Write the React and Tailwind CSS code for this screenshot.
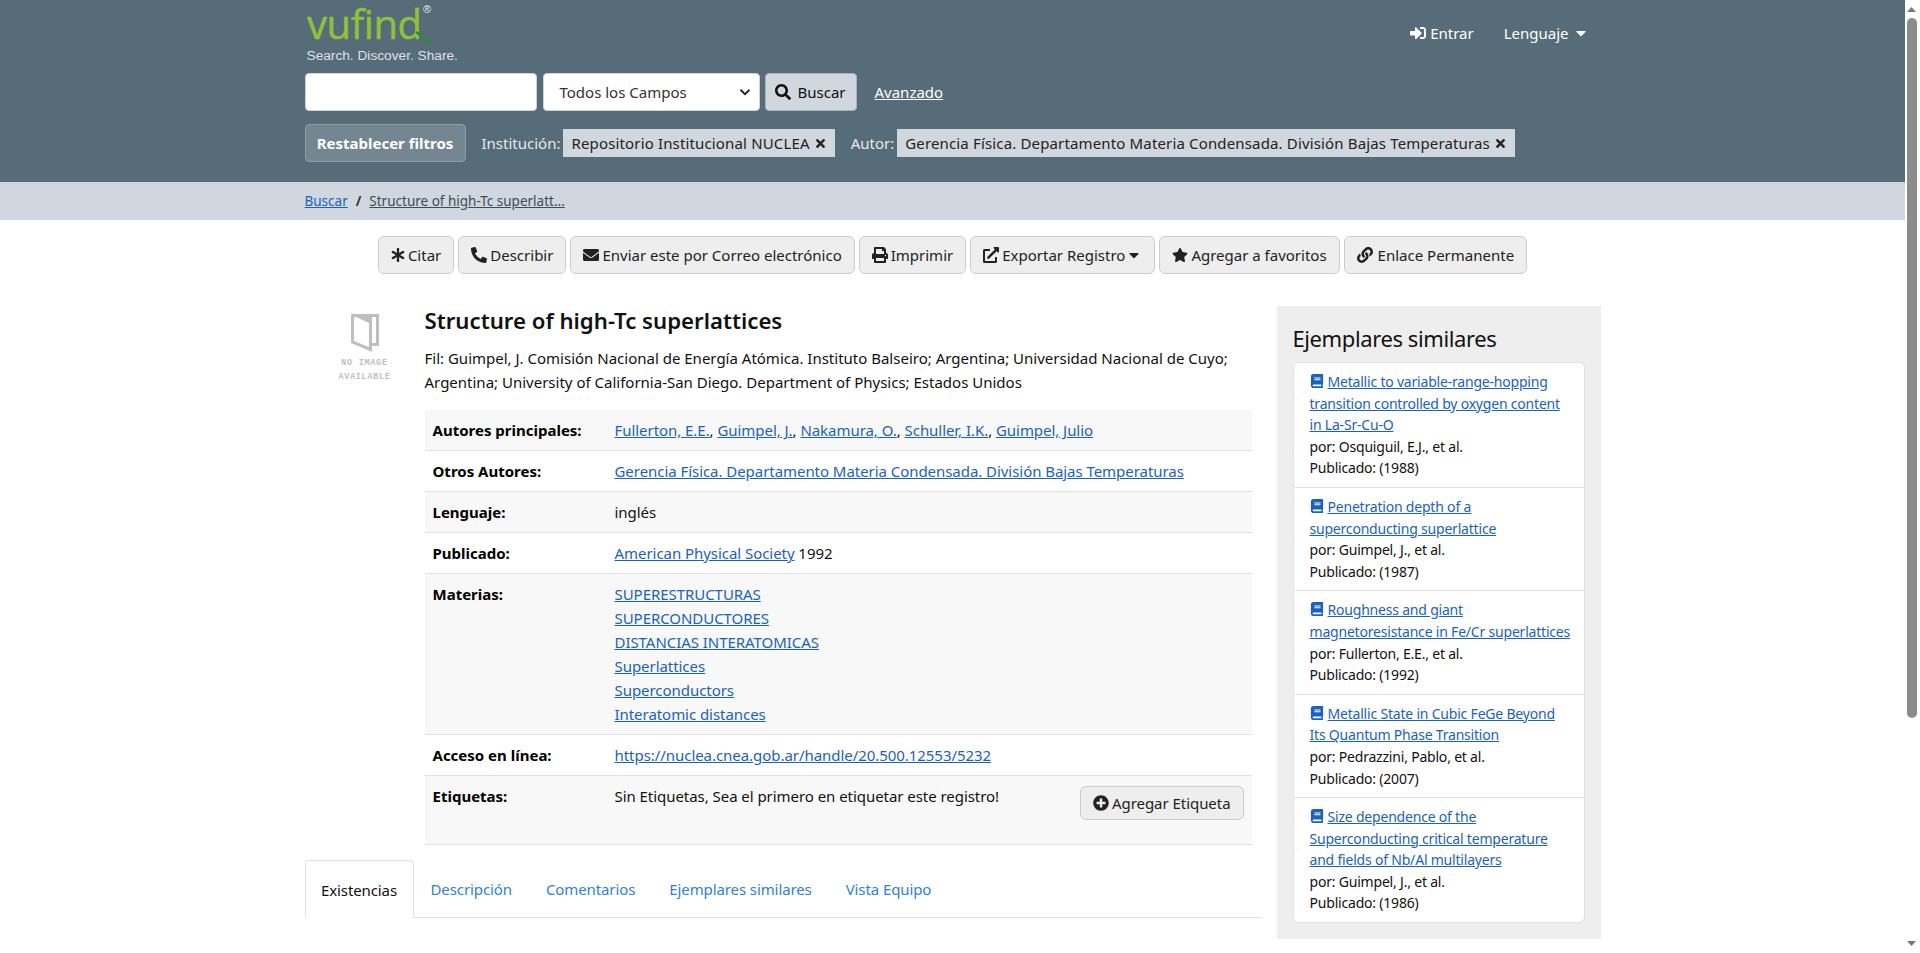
import { FaSignInAlt, FaCaretDown, FaSearch, FaAsterisk, FaPhoneAlt, FaEnvelope, FaPrint, FaExternalLinkAlt, FaStar, FaLink, FaPlusCircle, FaBook, FaTimes } from "react-icons/fa";

const actions = [
  { icon: <FaAsterisk size={14} />, label: "Citar" },
  { icon: <FaPhoneAlt size={16} />, label: "Describir" },
  { icon: <FaEnvelope size={16} />, label: "Enviar este por Correo electrónico" },
  { icon: <FaPrint size={16} />, label: "Imprimir" },
  { icon: <FaExternalLinkAlt size={16} />, label: "Exportar Registro", caret: true },
  { icon: <FaStar size={16} />, label: "Agregar a favoritos" },
  { icon: <FaLink size={16} className="mr-[2px]" />, label: "Enlace Permanente" },
];

const similar = [
  { title: "Metallic to variable-range-hopping transition controlled by oxygen content in La-Sr-Cu-O", by: "Osquiguil, E.J., et al.", year: "1988" },
  { title: "Penetration depth of a superconducting superlattice", by: "Guimpel, J., et al.", year: "1987" },
  { title: "Roughness and giant magnetoresistance in Fe/Cr superlattices", by: "Fullerton, E.E., et al.", year: "1992" },
  { title: "Metallic State in Cubic FeGe Beyond Its Quantum Phase Transition", by: "Pedrazzini, Pablo, et al.", year: "2007" },
  { title: "Size dependence of the Superconducting critical temperature and fields of Nb/Al multilayers", by: "Guimpel, J., et al.", year: "1986" },
];

const subjects = ["SUPERESTRUCTURAS", "SUPERCONDUCTORES", "DISTANCIAS INTERATOMICAS", "Superlattices", "Superconductors", "Interatomic distances"];
const authors = ["Fullerton, E.E.", "Guimpel, J.", "Nakamura, O.", "Schuller, I.K.", "Guimpel, Julio"];
const tabs = ["Descripción", "Comentarios", "Ejemplares similares", "Vista Equipo"];

const Lnk = ({ children }) => <a href="#" className="text-[#1a62bd] underline">{children}</a>;

const Row = ({ label, striped, children }) => (
  <div className={`flex border-b border-[#dee2e6] ${striped ? "bg-[#f8f8f8]" : "bg-white"}`}>
    <div className="w-[182px] shrink-0 px-2 py-2 font-bold text-black">{label}</div>
    <div className="flex-1 px-2 py-2 tracking-[-0.05px] text-[#111]">{children}</div>
  </div>
);

const Logo = () => (
  <svg width="140" height="48" viewBox="0 0 140 48" className="block">
    <text x="0" y="35" fontFamily="Open Sans, sans-serif" fontWeight="400" fontSize="40" letterSpacing="-0.4" stroke="#8fc13a" strokeWidth="0.5" fill="#8fc13a">vufind</text>
    <line x1="109" y1="28" x2="124" y2="39" stroke="#2f8a3a" strokeWidth="2.5" />
    <text x="116" y="9" fontFamily="Liberation Sans, sans-serif" fontSize="11" fill="#e6eaec">®</text>
  </svg>
);

const NoImage = () => (
  <div className="flex w-[120px] shrink-0 flex-col items-center pt-[7px]">
    <svg width="28" height="38" viewBox="0 0 28 38">
      <path d="M0 0H28V32H21V38L0 29Z M3 3V27L18 33V9L5 3Z M21 3V29H25V3Z" fill="#bfbfbf" fillRule="evenodd" />
    </svg>
    <div className="mt-[4px] text-center font-['Liberation_Mono',monospace] text-[8.5px] font-bold leading-[14px] tracking-[0.7px] text-[#c0c0c0]">
      NO IMAGE<br />AVAILABLE
    </div>
  </div>
);

export default function App() {
  return (
    <div className="flex h-screen overflow-hidden bg-white font-['Noto_Sans',sans-serif] text-[15px] leading-6 text-[#111]">
      <div className="w-[1905px] shrink-0">
        {/* Header */}
        <header className="h-[182px] bg-[#566c79]">
          <div className="mx-auto w-[1296px] pt-[4px]">
            <div className="flex justify-between">
              <div className="h-[69px] pl-[2px]">
                <div className="h-[44px]"><Logo /></div>
                <div className="font-['Liberation_Sans',sans-serif] text-[13.7px] leading-[16px] text-[#dde2e5]">Search. Discover. Share.</div>
              </div>
              <div className="flex items-center gap-[30px] self-start pr-[12px] pt-[17px] text-white">
                <span className="flex items-center gap-1"><FaSignInAlt size={16} /> Entrar</span>
                <span className="flex items-center gap-1">Lenguaje <FaCaretDown size={16} /></span>
              </div>
            </div>
            <div className="flex items-center">
              <input className="h-[38px] w-[232px] rounded border border-[#ced4da] bg-white" />
              <div className="ml-[6px] flex h-[38px] w-[217px] items-center justify-between rounded border border-[#ced4da] bg-white pl-4 pr-2 text-[#333]">
                Todos los Campos
                <svg width="12" height="12" viewBox="0 0 16 16"><path d="M2 5l6 6 6-6" fill="none" stroke="#222" strokeWidth="2.4" /></svg>
              </div>
              <button className="ml-[5px] flex h-[38px] w-[92px] items-center justify-center gap-[6px] rounded border border-[#a9b2b9] bg-[#d0d7de] text-[#111]">
                <FaSearch size={16} /> Buscar
              </button>
              <a href="#" className="ml-[18px] text-white underline">Avanzado</a>
            </div>
            <div className="mt-[13px] flex items-center">
              <button className="h-[38px] w-[161px] rounded border border-[#8d9ca5] bg-[#748690] font-bold text-white">Restablecer filtros</button>
              <span className="ml-4 text-[#e6eaec]">Institución:</span>
              <span className="ml-[3px] flex h-[28px] items-center gap-1 bg-[#d0d7de] px-2 tracking-[0.15px] text-[#222]">Repositorio Institucional NUCLEA <FaTimes size={13} /></span>
              <span className="ml-[16px] text-[#e6eaec]">Autor:</span>
              <span className="ml-[3px] flex h-[28px] items-center gap-1 bg-[#d0d7de] px-2 tracking-[0.15px] text-[#222]">Gerencia Física. Departamento Materia Condensada. División Bajas Temperaturas <FaTimes size={13} /></span>
            </div>
          </div>
        </header>

        {/* Breadcrumb */}
        <div className="h-[38px] bg-[#d0d7de]">
          <div className="mx-auto flex w-[1296px] items-center text-[13.5px] leading-[38px]">
            <Lnk>Buscar</Lnk>
            <span className="mx-[8px] font-bold text-[#333]">/</span>
            <a href="#" className="text-[#3d4d57] underline">Structure of high-Tc superlatt...</a>
          </div>
        </div>

        {/* Action toolbar */}
        <div className="mt-4 flex justify-center gap-[4px]">
          {actions.map((a) => (
            <button key={a.label} className="flex h-[38px] items-center gap-[3px] rounded-md border border-[#ccc] bg-[#eee] px-3 text-[#222]">
              {a.icon} {a.label} {a.caret && <FaCaretDown size={16} className="-ml-[2px]" />}
            </button>
          ))}
        </div>

        {/* Body */}
        <div className="mx-auto mt-8 flex w-[1296px]">
          <div className="w-[957px] shrink-0 pt-[1px]">
            <div className="flex">
              <NoImage />
              <div className="flex-1 pr-[10px]">
                <h1 className="text-[22.2px] font-semibold leading-[28px] text-[#111]">Structure of high-Tc superlattices</h1>
                <p className="mb-[16px] mt-[11px] pr-2">
                  Fil: Guimpel, J. Comisión Nacional de Energía Atómica. Instituto Balseiro; Argentina; Universidad Nacional de Cuyo; Argentina; University of California-San Diego. Department of Physics; Estados Unidos
                </p>
                <Row label="Autores principales:" striped>
                  {authors.map((n, i) => (
                    <span key={n}><Lnk>{n}</Lnk>{i < authors.length - 1 && ", "}</span>
                  ))}
                </Row>
                <Row label="Otros Autores:"><Lnk>Gerencia Física. Departamento Materia Condensada. División Bajas Temperaturas</Lnk></Row>
                <Row label="Lenguaje:" striped>inglés</Row>
                <Row label="Publicado:"><Lnk>American Physical Society</Lnk> 1992</Row>
                <Row label="Materias:" striped>
                  {subjects.map((s) => <div key={s}><Lnk>{s}</Lnk></div>)}
                </Row>
                <Row label="Acceso en línea:"><Lnk>https://nuclea.cnea.gob.ar/handle/20.500.12553/5232</Lnk></Row>
                <Row label="Etiquetas:" striped>
                  <div className="flex h-[52px] justify-between">
                    <span>Sin Etiquetas, Sea el primero en etiquetar este registro!</span>
                    <button className="mt-[2px] flex h-[34px] items-center gap-[3px] rounded-md border border-[#ccc] bg-[#eee] px-3 text-[#222]">
                      <FaPlusCircle size={16} /> Agregar Etiqueta
                    </button>
                  </div>
                </Row>
              </div>
            </div>

            {/* Tabs */}
            <div className="mt-[15px] flex h-[58px] border-b border-[#dee2e6] tracking-[-0.1px]">
              <div className="mb-[-1px] flex w-[109px] items-center justify-center rounded-t border border-b-0 border-[#dee2e6] bg-white">Existencias</div>
              {tabs.map((t) => (
                <div key={t} className="flex items-center px-[17px] text-[#2f7fdc]">{t}</div>
              ))}
            </div>
          </div>

          {/* Sidebar */}
          <aside className="ml-[15px] h-[633px] w-[324px] bg-[#eee] px-4 pt-[16px]">
            <h2 className="mb-[8px] text-[22px] font-normal leading-[32px] tracking-[-0.4px] text-[#111]">Ejemplares similares</h2>
            <ul className="overflow-hidden rounded-md border border-[#dee2e6] bg-white text-[14px] leading-[21.6px] tracking-[-0.2px]">
              {similar.map((s, i) => (
                <li key={s.title} className={`py-2 pl-4 pr-[10px] ${i ? "border-t border-[#dee2e6]" : ""}`}>
                  <div><FaBook size={14} className="mr-1 inline align-[-1px] text-[#1a62bd]" /><Lnk>{s.title}</Lnk></div>
                  <div>por: {s.by}</div>
                  <div>Publicado: ({s.year})</div>
                </li>
              ))}
            </ul>
          </aside>
        </div>
      </div>

      {/* Scrollbar */}
      <div className="flex w-[15px] shrink-0 flex-col items-center bg-white pr-[2px]">
        <svg width="13" height="18" viewBox="0 0 13 18"><path d="M2 12l4.5-5 4.5 5z" fill="#777" /></svg>
        <div className="h-[700px] w-[10px] rounded-t-full rounded-b-full bg-[#8b8b8b]" />
        <div className="flex-1" />
        <svg width="13" height="18" viewBox="0 0 13 18"><path d="M2 6l4.5 5 4.5-5z" fill="#777" /></svg>
      </div>
    </div>
  );
}
